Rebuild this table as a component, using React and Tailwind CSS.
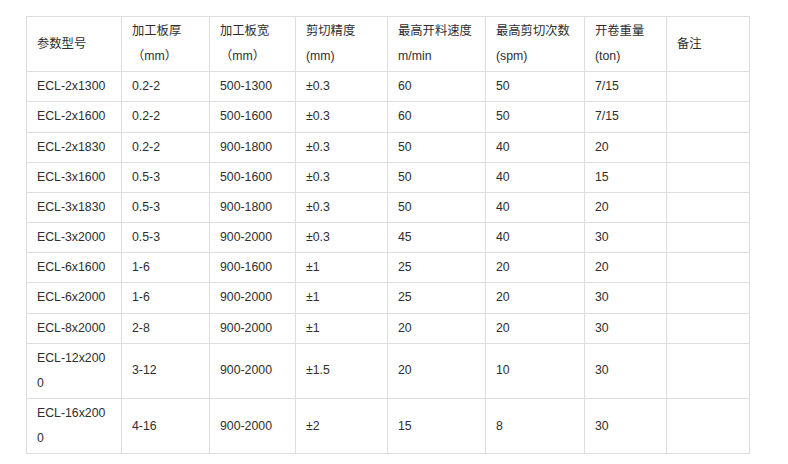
const HEAD = [
  ['参数型号'],
  ['加工板厚', '（mm）'],
  ['加工板宽', '（mm）'],
  ['剪切精度', '(mm)'],
  ['最高开料速度', 'm/min'],
  ['最高剪切次数', '(spm)'],
  ['开卷重量', '(ton)'],
  ['备注'],
];

const WIDTHS = [95, 88, 86, 92, 98, 99, 82, 83];

const ROWS = [
  [['ECL-2x1300'], '0.2-2', '500-1300', '±0.3', '60', '50', '7/15'],
  [['ECL-2x1600'], '0.2-2', '500-1600', '±0.3', '60', '50', '7/15'],
  [['ECL-2x1830'], '0.2-2', '900-1800', '±0.3', '50', '40', '20'],
  [['ECL-3x1600'], '0.5-3', '500-1600', '±0.3', '50', '40', '15'],
  [['ECL-3x1830'], '0.5-3', '900-1800', '±0.3', '50', '40', '20'],
  [['ECL-3x2000'], '0.5-3', '900-2000', '±0.3', '45', '40', '30'],
  [['ECL-6x1600'], '1-6', '900-1600', '±1', '25', '20', '20'],
  [['ECL-6x2000'], '1-6', '900-2000', '±1', '25', '20', '30'],
  [['ECL-8x2000'], '2-8', '900-2000', '±1', '20', '20', '30'],
  [['ECL-12x200', '0'], '3-12', '900-2000', '±1.5', '20', '10', '30'],
  [['ECL-16x200', '0'], '4-16', '900-2000', '±2', '15', '8', '30'],
];

const cell = 'border border-[#dddddd] pl-[10px] pr-1 py-[2px] align-middle text-left font-normal leading-[25.15px]';

export default function App() {
  return (
    <div className="w-[788px] h-[464px] bg-white pt-4 pl-[26px] text-[12.3px] text-[#2e2e2e] font-['Liberation_Sans','Noto_Sans_CJK_SC',Arial,sans-serif]">
      <table className="table-fixed border-collapse w-[724px]">
        <colgroup>
          {WIDTHS.map((w, i) => (
            <col key={i} style={{ width: w }} />
          ))}
        </colgroup>
        <thead>
          <tr>
            {HEAD.map((h, i) => (
              <th key={i} className={cell}>
                {h.map((line, j) => (
                  <div key={j}>{line}</div>
                ))}
              </th>
            ))}
          </tr>
        </thead>
        <tbody>
          {ROWS.map((r, i) => (
            <tr key={i}>
              <td className={cell}>
                {r[0].map((line, j) => (
                  <div key={j}>{line}</div>
                ))}
              </td>
              {r.slice(1).map((v, j) => (
                <td key={j} className={cell}>{v}</td>
              ))}
              <td className={cell}></td>
            </tr>
          ))}
        </tbody>
      </table>
    </div>
  );
}
